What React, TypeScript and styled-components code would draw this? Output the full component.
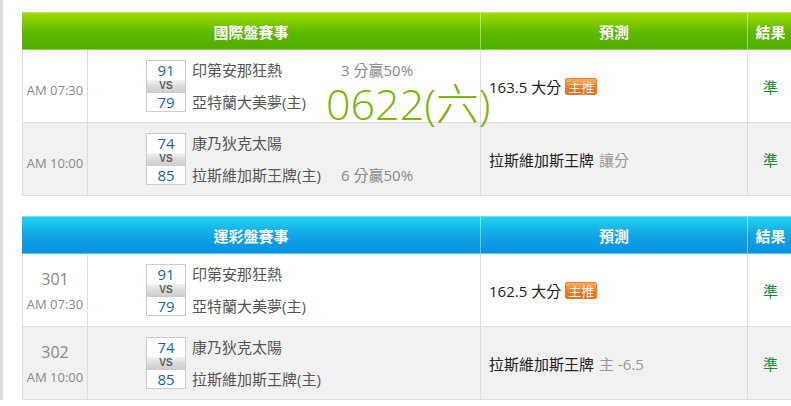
import React from "react";
import styled, { createGlobalStyle, css } from "styled-components";

type Game = {
  no?: string;
  time: string;
  home: string;
  away: string;
  homeScore: number;
  awayScore: number;
  spread?: string;
  spreadOn?: "top" | "bottom";
  pick: string;
  pickNote?: string;
  hot?: boolean;
  result: string;
};

const GlobalStyle = createGlobalStyle`
  html, body {
    margin: 0;
    padding: 0;
    background: #ffffff;
    overflow: hidden;
  }
  body {
    font-family: "Open Sans", "Noto Sans CJK TC", sans-serif;
  }
`;

const Page = styled.div`
  border-left: 3px solid #dcdcdc;
  padding: 12px 0 0 19px;
  display: flex;
  flex-direction: column;
  gap: 20px;
  width: 800px;
`;

const Board = styled.div`
  position: relative;
  width: 771px;
`;

const HeaderRow = styled.div<{ $tone: "green" | "blue" }>`
  display: grid;
  grid-template-columns: 459px 267px 1fr;
  height: 38px;
  box-sizing: border-box;
  border-top: 1px solid rgba(255, 255, 255, 0.35);
  border-bottom: 1px solid rgba(255, 255, 255, 0.35);
  ${({ $tone }) =>
    $tone === "green"
      ? css`
          background: linear-gradient(#9cdb00, #5db800 55%, #4fae00);
          border-top-color: #b4e85c;
          border-bottom-color: #8fd04a;
        `
      : css`
          background: linear-gradient(#22d3f2, #11a6e6 50%, #0891e0);
          border-top-color: #6fe0f5;
          border-bottom-color: #5cc4f0;
        `}
`;

const HeadCell = styled.div`
  display: flex;
  align-items: center;
  justify-content: center;
  color: #ffffff;
  font-size: 15px;
  font-weight: 700;
  border-right: 1px solid rgba(255, 255, 255, 0.45);
  text-shadow: 0 0 1px rgba(0, 0, 0, 0.15);
  &:last-child {
    border-right: none;
  }
`;

const Row = styled.div<{ $alt?: boolean }>`
  display: grid;
  grid-template-columns: 65px 393px 267px 1fr;
  height: 73px;
  box-sizing: border-box;
  border-left: 1px solid #dddddd;
  border-bottom: 1px solid #dddddd;
  background: ${({ $alt }) => ($alt ? "#f1f1f1" : "#ffffff")};
`;

const Cell = styled.div`
  box-sizing: border-box;
  border-right: 1px solid #dddddd;
  display: flex;
  align-items: center;
`;

const TimeCell = styled(Cell)<{ $single?: boolean }>`
  flex-direction: column;
  justify-content: center;
  gap: 5px;
  padding-top: ${({ $single }) => ($single ? "8px" : "0")};
  color: #888888;
  font-size: 13px;
`;

const GameNo = styled.div`
  font-size: 16px;
  color: #888888;
`;

const TeamsCell = styled(Cell)`
  padding-left: 58px;
  gap: 6px;
`;

const ScoreBox = styled.div`
  width: 40px;
  box-sizing: border-box;
  border: 1px solid #cccccc;
  display: flex;
  flex-direction: column;
  background: #ffffff;
`;

const Score = styled.div<{ $bottom?: boolean }>`
  height: ${({ $bottom }) => ($bottom ? "18px" : "19px")};
  line-height: ${({ $bottom }) => ($bottom ? "18px" : "19px")};
  text-align: center;
  color: #1565a6;
  font-size: 15px;
  ${({ $bottom }) => $bottom && "border-top: 1px solid #cccccc;"}
`;

const Vs = styled.div`
  height: 12px;
  line-height: 12px;
  text-align: center;
  font-size: 10px;
  font-weight: 700;
  color: #606060;
  background: linear-gradient(#f4f4f4, #dcdcdc 50%, #cfcfcf);
  font-family: "Liberation Sans", sans-serif;
`;

const Names = styled.div`
  height: 52px;
  display: flex;
  flex-direction: column;
  justify-content: space-between;
`;

const NameLine = styled.div`
  display: flex;
  height: 20px;
  line-height: 20px;
  font-size: 15px;
  color: #555555;
`;

const TeamName = styled.span`
  width: 149px;
  white-space: nowrap;
`;

const Spread = styled.span`
  color: #888888;
  white-space: nowrap;
`;

const PickCell = styled(Cell)`
  padding-left: 8px;
  font-size: 15px;
  color: #222222;
  white-space: nowrap;
`;

const PickNote = styled.span`
  color: #999999;
  margin-left: 5px;
`;

const Hot = styled.span`
  display: inline-flex;
  align-items: center;
  height: 17px;
  box-sizing: border-box;
  padding: 0 2px;
  margin-left: 4px;
  border: 1px solid #ee7a2a;
  border-radius: 2px;
  background: linear-gradient(#ffb060, #f67a20 55%, #f06a10);
  color: #ffffff;
  font-size: 13px;
  text-shadow: 0 0 1px rgba(150, 50, 0, 0.6);
`;

const ResultCell = styled(Cell)`
  border-right: none;
  justify-content: center;
  color: #1b8a30;
  font-size: 15px;
`;

const DateStamp = styled.div`
  position: absolute;
  left: 304px;
  top: 70px;
  font-size: 43px;
  line-height: 1;
  font-weight: 300;
  color: #74b800;
  white-space: nowrap;
  pointer-events: none;
`;

const intl: Game[] = [
  {
    time: "AM 07:30",
    home: "印第安那狂熱",
    away: "亞特蘭大美夢(主)",
    homeScore: 91,
    awayScore: 79,
    spread: "3 分贏50%",
    spreadOn: "top",
    pick: "163.5 大分",
    hot: true,
    result: "準",
  },
  {
    time: "AM 10:00",
    home: "康乃狄克太陽",
    away: "拉斯維加斯王牌(主)",
    homeScore: 74,
    awayScore: 85,
    spread: "6 分贏50%",
    spreadOn: "bottom",
    pick: "拉斯維加斯王牌",
    pickNote: "讓分",
    result: "準",
  },
];

const sport: Game[] = [
  {
    no: "301",
    time: "AM 07:30",
    home: "印第安那狂熱",
    away: "亞特蘭大美夢(主)",
    homeScore: 91,
    awayScore: 79,
    pick: "162.5 大分",
    hot: true,
    result: "準",
  },
  {
    no: "302",
    time: "AM 10:00",
    home: "康乃狄克太陽",
    away: "拉斯維加斯王牌(主)",
    homeScore: 74,
    awayScore: 85,
    pick: "拉斯維加斯王牌",
    pickNote: "主 -6.5",
    result: "準",
  },
];

const GameRow: React.FC<{ game: Game; alt: boolean }> = ({ game, alt }) => (
  <Row $alt={alt}>
    <TimeCell $single={!game.no}>
      {game.no && <GameNo>{game.no}</GameNo>}
      <div>{game.time}</div>
    </TimeCell>
    <TeamsCell>
      <ScoreBox>
        <Score>{game.homeScore}</Score>
        <Vs>VS</Vs>
        <Score $bottom>{game.awayScore}</Score>
      </ScoreBox>
      <Names>
        <NameLine>
          <TeamName>{game.home}</TeamName>
          {game.spreadOn === "top" && <Spread>{game.spread}</Spread>}
        </NameLine>
        <NameLine>
          <TeamName>{game.away}</TeamName>
          {game.spreadOn === "bottom" && <Spread>{game.spread}</Spread>}
        </NameLine>
      </Names>
    </TeamsCell>
    <PickCell>
      {game.pick}
      {game.pickNote && <PickNote>{game.pickNote}</PickNote>}
      {game.hot && <Hot>主推</Hot>}
    </PickCell>
    <ResultCell>{game.result}</ResultCell>
  </Row>
);

const Table: React.FC<{
  title: string;
  tone: "green" | "blue";
  games: Game[];
  stamp?: string;
}> = ({ title, tone, games, stamp }) => (
  <Board>
    <HeaderRow $tone={tone}>
      <HeadCell>{title}</HeadCell>
      <HeadCell>預測</HeadCell>
      <HeadCell>結果</HeadCell>
    </HeaderRow>
    {games.map((g, i) => (
      <GameRow key={i} game={g} alt={i % 2 === 1} />
    ))}
    {stamp && <DateStamp>{stamp}</DateStamp>}
  </Board>
);

const App: React.FC = () => (
  <>
    <GlobalStyle />
    <Page>
      <Table title="國際盤賽事" tone="green" games={intl} stamp="0622(六)" />
      <Table title="運彩盤賽事" tone="blue" games={sport} />
    </Page>
  </>
);

export default App;
